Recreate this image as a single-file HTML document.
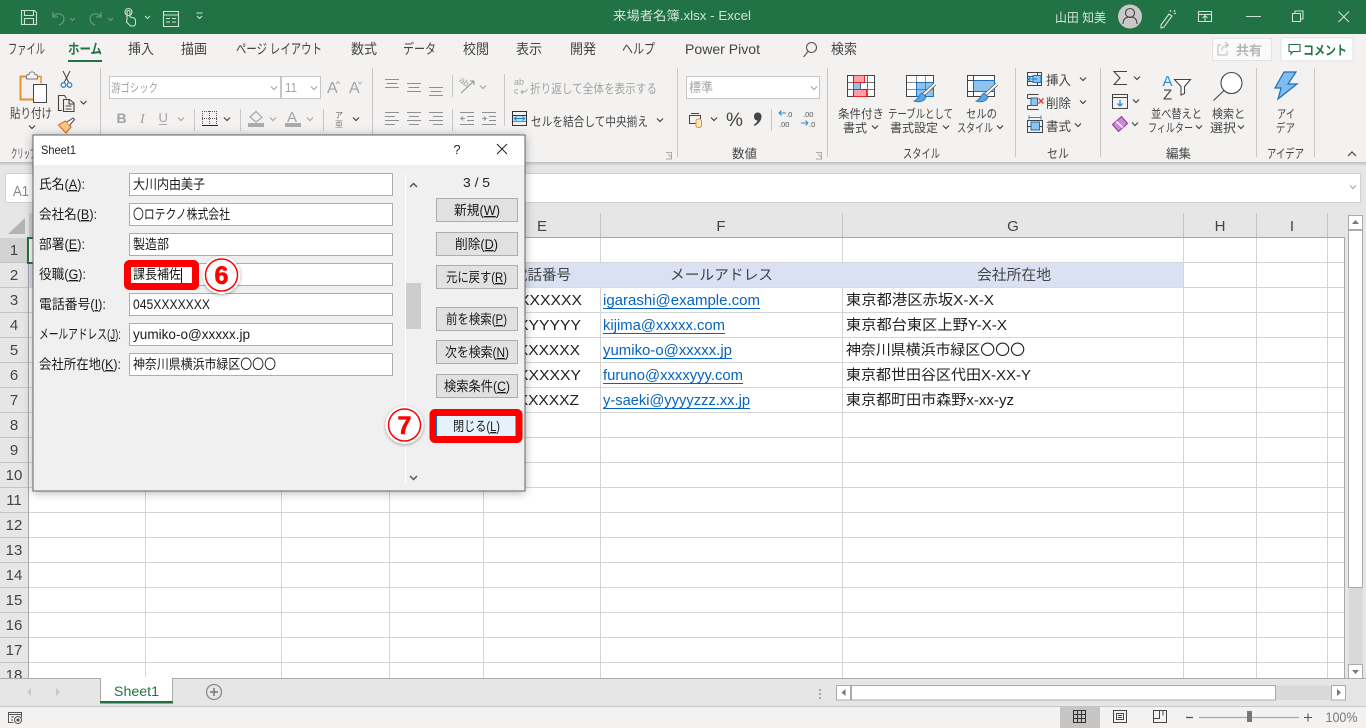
<!DOCTYPE html>
<html lang="ja"><head><meta charset="utf-8"><title>来場者名簿.xlsx - Excel</title>
<style>
html,body{margin:0;padding:0;width:1366px;height:728px;overflow:hidden;background:#e6e6e6}
svg{display:block}
text{font-family:"Liberation Sans","Noto Sans CJK JP",sans-serif;font-size:13px;fill:#444}
.t{font-size:13px;fill:#444}
.dis{fill:#a3a3a3}
.cell{font-size:15px;fill:#222}
.lk{font-size:15px;fill:#0563c1}
.hd{font-size:15px;fill:#444;text-anchor:middle}
.rn{font-size:15px;fill:#444;text-anchor:middle}
.d{font-size:13.5px;fill:#1a1a1a}
.u{text-decoration:underline}
.ttl{font-size:12.5px;fill:#d3e3da}
.tb{font-size:14px}
.rl{font-size:12px}
.gl{font-size:12.5px}
</style></head><body>
<svg width="1366" height="728" viewBox="0 0 1366 728" xmlns="http://www.w3.org/2000/svg">
<defs>
<path id="c" d="M-3-1.500 0 1.500 3-1.500" fill="none" stroke="#444" stroke-width="1.200"/>
<path id="cd" d="M-3-1.500 0 1.500 3-1.500" fill="none" stroke="#a8a8a8" stroke-width="1.200"/>
<filter id="sh" x="-10%" y="-10%" width="120%" height="120%"><feDropShadow dx="0" dy="1" stdDeviation="5" flood-color="#000" flood-opacity=".35"/></filter>
<filter id="sh2" x="-30%" y="-30%" width="160%" height="160%"><feDropShadow dx="0" dy="1" stdDeviation="1.500" flood-color="#000" flood-opacity=".35"/></filter>
<linearGradient id="rs" x1="0" y1="0" x2="0" y2="1"><stop offset="0" stop-color="#bdbdbd"/><stop offset="1" stop-color="#e6e6e6"/></linearGradient>
</defs>

<!-- base -->
<rect width="1366" height="728" fill="#e6e6e6"/>
<rect x="0" y="0" width="1366" height="34" fill="#217346"/>
<rect x="0" y="34" width="1366" height="128" fill="#f3f2f1"/>
<rect x="0" y="162" width="1366" height="4" fill="url(#rs)"/>

<!-- title bar icons -->
<g fill="none" stroke="#cfe0d6" stroke-width="1.100">
<path d="M21.500 10.500h13l2 2v12h-15zM24.500 10.500v5h9v-5M24.500 24.500v-6h9v6"/>
<g stroke="#6f9f85"><path d="M53 12v5h5M53 17c3-5 11-4 11 2 0 3-2 5-5 6"/><path d="M101 12v5h-5M101 17c-3-5-11-4-11 2 0 3 2 5 5 6"/></g>
<path d="M127 19v-7c0-2 3-2 3 0v5l4 1c1.500.5 1.500 2 1.500 3v2c0 2-1 3-2 3h-3l-4-4z"/><circle cx="128.500" cy="12" r="3.500"/>
<path d="M163.500 11.500h15v15h-15zM163.500 15h15M166 18.500h4M172 18.500h4M166 22h4M172 22h4"/>
<path d="M196.500 13h6M197 16l2.500 2.500L202 16"/>
<path d="M1161 25l8-11 3 2-8 11-3 1zM1170 10l1 2M1175 10l-1 2M1176 13l-2 1"/>
<path d="M1198.500 11.500h13v10h-13zM1198.500 14.500h13M1205 21v-5M1202.500 18l2.500-2.500 2.500 2.500"/>
<path d="M1246 16.500h15M1292.500 13.500h8v8h-8zM1295 13.500v-2.500h8v8h-2.500M1338.500 11.500l10.500 10.500M1349 11.500l-10.500 10.500"/>
</g>
<path d="M70 18l2.500 2.500L75 18M108 18l2.500 2.500L113 18" fill="none" stroke="#6f9f85"/>
<path d="M145 16l2.500 2.500L150 16" fill="none" stroke="#cfe0d6"/>
<text x="613" y="20" class="ttl" textLength="138" lengthAdjust="spacingAndGlyphs">来場者名簿.xlsx  -  Excel</text>
<text x="1055" y="22" class="ttl" textLength="51" lengthAdjust="spacingAndGlyphs">山田 知美</text>
<circle cx="1130" cy="16.500" r="12" fill="#c9c9c9"/>
<circle cx="1130" cy="13" r="4.500" fill="none" stroke="#444" stroke-width="1.100"/><path d="M1123 24c0-5 3-7 7-7s7 2 7 7" fill="none" stroke="#444" stroke-width="1.100"/>

<!-- tabs -->
<g>
<text class="tb" x="8" y="54" textLength="37" lengthAdjust="spacingAndGlyphs">ファイル</text>
<text class="tb" x="68" y="54" textLength="34" lengthAdjust="spacingAndGlyphs" style="font-weight:700;fill:#217346">ホーム</text>
<text class="tb" x="128" y="54" textLength="26" lengthAdjust="spacingAndGlyphs">挿入</text>
<text class="tb" x="181" y="54" textLength="26" lengthAdjust="spacingAndGlyphs">描画</text>
<text class="tb" x="236" y="54" textLength="86" lengthAdjust="spacingAndGlyphs">ページ レイアウト</text>
<text class="tb" x="351" y="54" textLength="26" lengthAdjust="spacingAndGlyphs">数式</text>
<text class="tb" x="403" y="54" textLength="33" lengthAdjust="spacingAndGlyphs">データ</text>
<text class="tb" x="463" y="54" textLength="26" lengthAdjust="spacingAndGlyphs">校閲</text>
<text class="tb" x="516" y="54" textLength="26" lengthAdjust="spacingAndGlyphs">表示</text>
<text class="tb" x="570" y="54" textLength="26" lengthAdjust="spacingAndGlyphs">開発</text>
<text class="tb" x="622" y="54" textLength="33" lengthAdjust="spacingAndGlyphs">ヘルプ</text>
<text class="tb" x="685" y="54" textLength="75" lengthAdjust="spacingAndGlyphs">Power Pivot</text>
<text class="tb" x="831" y="54" textLength="26" lengthAdjust="spacingAndGlyphs">検索</text>
</g>
<rect x="68" y="60" width="34" height="2" fill="#217346"/>
<circle cx="811.500" cy="47.500" r="5" fill="none" stroke="#555" stroke-width="1.100"/><path d="M808 51.500l-4.500 5.500" stroke="#555" stroke-width="1.100"/>
<rect x="1212.500" y="38.500" width="59" height="22" fill="#fbfafa" stroke="#e2e1e0"/>
<path d="M1221 45h-3v10h9v-4M1222 50c0-3 2-5 6-5M1225 42l3.500 3-3.500 3" fill="none" stroke="#bbb"/>
<text x="1236" y="55" textLength="26" lengthAdjust="spacingAndGlyphs" style="font-size:13px;font-weight:700;fill:#b5b5b5">共有</text>
<rect x="1281" y="38" width="72" height="23" rx="1" fill="#fff" stroke="#e2e1e0"/>
<path d="M1289 44.500h11v7h-7l-2 2.500v-2.500h-2z" fill="none" stroke="#217346" stroke-width="1.100"/>
<text x="1303" y="55" textLength="44" lengthAdjust="spacingAndGlyphs" style="font-weight:700;fill:#217346">コメント</text>

<!-- ribbon separators -->
<g stroke="#c8c8c8">
<path d="M100.500 68v89M372.500 68v89M677.500 68v89M827.500 68v89M1015.500 68v89M1100.500 68v89M1256.500 68v89M1314.500 68v89M504.500 74v52"/>
<path d="M194.500 109v22M240.500 109v22M323.500 109v22M452.500 75v22M452.500 109v22M771.500 109v22"/>
</g>

<!-- clipboard -->
<path d="M26 76.500h-5.500v23H33" fill="none" stroke="#e8912c" stroke-width="2"/><path d="M37 76.500h4v7" fill="none" stroke="#e8912c" stroke-width="1.500"/>
<path d="M26.500 79v-3c0-1.500 2-1.500 2.500-1.500 0-3.500 6-3.500 6 0 .5 0 2.500 0 2.500 1.500v3z" fill="#f3f2f1" stroke="#777"/>
<rect x="33.500" y="84.500" width="13" height="18" fill="#fff" stroke="#444"/>
<text x="10" y="118" class="t" textLength="42" lengthAdjust="spacingAndGlyphs">貼り付け</text>
<use href="#c" x="32" y="127"/>
<path d="M63 71l6 12M70 71l-6 12" stroke="#444" fill="none"/><circle cx="63.500" cy="85" r="2.300" fill="none" stroke="#2b88d8" stroke-width="1.300"/><circle cx="69.500" cy="85" r="2.300" fill="none" stroke="#2b88d8" stroke-width="1.300"/>
<path d="M62 110.500h-3.500v-15h6l2 3M63.500 99.500h6l4.500 3.500v8.500h-10.500zM69 99.500V104h5M65.500 106h6M65.500 109h6" fill="none" stroke="#444" stroke-width="1.100"/>
<use href="#c" x="83.500" y="102.500"/>
<path d="M58.500 125l7-4 5.500 6-5 6z" fill="#f9c88a" stroke="#d9761a" stroke-width="1.200"/><path d="M67 122l6-4 1.500 1.500-5 6" fill="#fff" stroke="#444"/>

<!-- font -->
<rect x="109.500" y="76.500" width="171" height="22" fill="#fff" stroke="#c6c6c6"/>
<rect x="281.500" y="76.500" width="39" height="22" fill="#fff" stroke="#c6c6c6"/>
<text x="111" y="92" class="dis" textLength="47" lengthAdjust="spacingAndGlyphs" style="font-size:12px">游ゴシック</text>
<use href="#cd" x="274" y="88"/><use href="#cd" x="314" y="88"/>
<text x="285" y="92" class="dis" textLength="12" lengthAdjust="spacingAndGlyphs">11</text>
<text x="327" y="93" class="dis" style="font-size:16px">A</text><path d="M336 84l2-2.500 2 2.500" fill="none" stroke="#aaa"/>
<text x="349" y="93" class="dis" style="font-size:16px">A</text><path d="M358 81.500l2 2.500 2-2.500" fill="none" stroke="#aaa"/>
<text x="116.500" y="123" class="dis" style="font-size:14px;font-weight:700">B</text>
<text x="140" y="123" class="dis" style="font-size:14px;font-style:italic;font-family:'Liberation Serif',serif">I</text>
<text x="158.500" y="122" class="dis" style="font-size:13px">U</text><path d="M159 124.500h8" stroke="#aaa"/>
<use href="#cd" x="181" y="119"/>
<path d="M202 111.500h15M202 118.500h15M209.500 111v14M202.500 111v13M216.500 111v13" stroke="#555" stroke-dasharray="1 1" fill="none"/><path d="M202 125.500h16" stroke="#222"/>
<use href="#c" x="227" y="119"/>
<path d="M250 117l6-5.500 6 6-6 4.500z" fill="none" stroke="#a8a8a8" stroke-width="1.200"/><rect x="248" y="123" width="16" height="4" fill="#aaa"/><use href="#cd" x="273" y="119"/>
<text x="287" y="122" class="dis" style="font-size:15px">A</text><rect x="285" y="123" width="16" height="4" fill="#aaa"/><use href="#cd" x="310" y="119"/>
<text x="339" y="118" class="dis" text-anchor="middle" style="font-size:8px;fill:#666">ア</text><text x="339" y="127" text-anchor="middle" style="font-size:8px;fill:#888">亜</text><use href="#c" x="356" y="119"/>

<!-- alignment -->
<g stroke="#8f8f8f" fill="none">
<path d="M385 79.500h14M386.500 83.500h11M385 87.500h14"/>
<path d="M407 83.500h14M408.500 87.500h11M407 91.500h14"/>
<path d="M429 87.500h14M430.500 91.500h11M429 95.500h14"/>
<path d="M385 112.500h14M385 116.500h10M385 120.500h14M385 124.500h10"/>
<path d="M407 112.500h14M409 116.500h10M407 120.500h14M409 124.500h10"/>
<path d="M429 112.500h14M433 116.500h10M429 120.500h14M433 124.500h10"/>
<path d="M460 112.500h14M467 116.500h7M467 120.500h7M460 124.500h14M465 118.500h-4l2-2M461 118.500l2 2"/>
<path d="M482 112.500h14M489 116.500h7M489 120.500h7M482 124.500h14M482 118.500h4l-2-2M486 118.500l-2 2"/>
<path d="M461 93l13-12M474 81h-4M474 81v4"/>
</g>
<text x="459" y="84" class="dis" style="font-size:9px" transform="rotate(40 463 82)">ab</text>
<use href="#cd" x="483" y="87"/>
<text x="514" y="85" class="dis" style="font-size:9px">ab</text><text x="514" y="94" class="dis" style="font-size:9px">c</text><path d="M527 89c0 3-3 3-6 3M523 90l-2 2 2 2" fill="none" stroke="#aaa"/>
<text x="530" y="93" class="dis" textLength="127" lengthAdjust="spacingAndGlyphs" style="font-size:12.500px">折り返して全体を表示する</text>
<path d="M512.500 111.500h14v14h-14zM512.500 115.500h14M512.500 121.500h14" fill="none" stroke="#333"/><rect x="513" y="116" width="13" height="5.500" fill="#bfe0f7"/><path d="M514.500 118.500h10M516.500 116.500l-2 2 2 2M522.500 116.500l2 2-2 2" fill="none" stroke="#1a7fd0"/>
<text x="531" y="126" class="t" textLength="117" lengthAdjust="spacingAndGlyphs" style="font-size:12.500px">セルを結合して中央揃え</text>
<use href="#c" x="660" y="120"/>

<!-- number -->
<rect x="686.500" y="76.500" width="133" height="22" fill="#fff" stroke="#c6c6c6"/>
<text x="689" y="92" class="dis" textLength="24" lengthAdjust="spacingAndGlyphs">標準</text><use href="#cd" x="814" y="88"/>
<path d="M689.500 115.500h11v8h-11zM691 113.500h8" fill="none" stroke="#444"/><rect x="696" y="119" width="5.500" height="8.500" rx="2" fill="#fbe6c5" stroke="#e8912c"/>
<use href="#c" x="714" y="119"/>
<text x="726" y="126" style="font-size:19px;fill:#444">%</text>
<path d="M757.500 112.500c2.500 0 4 1.500 4 4 0 4-3 7.500-7 9.500l-.8-1c2-1.500 3.300-3 3.800-4.500-2.200 0-3.500-1.800-3.500-4 0-2.500 1.500-4 3.500-4z" fill="#444"/>
<path d="M779 113h7M781.500 110.500l-2.500 2.500 2.500 2.500" stroke="#2b88d8" fill="none"/>
<text x="786" y="117" style="font-size:7.500px;fill:#555">.0</text><text x="779" y="127" style="font-size:7.500px;fill:#555">.00</text>
<text x="803" y="117" style="font-size:7.500px;fill:#555">.00</text><text x="809" y="127" style="font-size:7.500px;fill:#555">.0</text>
<path d="M801 123h7M805.500 120.500l2.500 2.500-2.500 2.500" stroke="#2b88d8" fill="none"/>

<!-- styles icons -->
<rect x="847.500" y="75.500" width="27" height="21" fill="#fff" stroke="#444"/>
<rect x="906.500" y="75.500" width="27" height="21" fill="#fff" stroke="#444"/>
<rect x="967.500" y="75.500" width="27" height="21" fill="#fff" stroke="#444"/>
<rect x="853.500" y="75.500" width="11" height="7" fill="#ffa0a8" stroke="#e22"/><rect x="853.500" y="89.500" width="13" height="7" fill="#ffa0a8" stroke="#e22"/><rect x="853.500" y="83" width="7.500" height="6.500" fill="#8ec3ee"/>
<path d="M847.500 82.500h6M864.500 82.500h10M847.500 89.500h27M853.500 75.500v21M860.500 82.500v7M867.500 75.500v21" fill="none" stroke="#444" stroke-opacity=".75"/>
<rect x="916" y="82" width="17" height="15" fill="#8ec3ee"/><path d="M906.500 82.500h27M906.500 89.500h27M916.500 75.500v21M925.500 75.500v21" fill="none" stroke="#444" stroke-opacity=".6"/>
<path d="M916.500 82.500h17v14h-17z" fill="none" stroke="#1e6fb8"/>
<rect x="973.500" y="80.500" width="21" height="11" fill="#8ec3ee" stroke="#1e6fb8"/><path d="M967.500 80.500h6M973.500 75.500v5M973.500 91.500v5M967.500 91.500h6" stroke="#444" fill="none"/>
<path d="M935 84l-13 12" stroke="#555" stroke-width="3.500"/><path d="M935 84l-13 12" stroke="#fff" stroke-width="2"/><path d="M922 93c-3 1-3 6-8 8 5 2 11 0 12-4z" fill="#5aa6e3" stroke="#1e6fb8" stroke-width=".8"/>
<path d="M997 84l-13 12" stroke="#555" stroke-width="3.500"/><path d="M997 84l-13 12" stroke="#fff" stroke-width="2"/><path d="M984 93c-3 1-3 6-8 8 5 2 11 0 12-4z" fill="#5aa6e3" stroke="#1e6fb8" stroke-width=".8"/>
<g>
<text class="rl" x="838" y="118" textLength="46" lengthAdjust="spacingAndGlyphs">条件付き</text>
<text class="rl" x="843" y="132" textLength="24" lengthAdjust="spacingAndGlyphs">書式</text>
<text class="rl" x="888" y="118" textLength="65" lengthAdjust="spacingAndGlyphs">テーブルとして</text>
<text class="rl" x="890" y="132" textLength="48" lengthAdjust="spacingAndGlyphs">書式設定</text>
<text class="rl" x="966" y="118" textLength="31" lengthAdjust="spacingAndGlyphs">セルの</text>
<text class="rl" x="957" y="132" textLength="36" lengthAdjust="spacingAndGlyphs">スタイル</text>
</g>
<use href="#c" x="875" y="127"/><use href="#c" x="946" y="127"/><use href="#c" x="1000" y="127"/>

<!-- cells -->
<path d="M1027.500 72.500h14v13h-14z" fill="none" stroke="#444"/><path d="M1027.500 76.500h5M1027.500 81.500h5M1037.500 72.500v13" stroke="#444" fill="none"/><rect x="1033" y="75.500" width="8" height="7" fill="#8ec3ee" stroke="#1e6fb8"/><path d="M1037 79h-9M1031 76.500l-3 2.500 3 2.500" stroke="#1e8fe0" fill="none" stroke-width="1.200"/>
<path d="M1027.500 94.500h11M1027.500 109.500h11M1027.500 94.500v4M1027.500 105.500v4M1027.500 98.500h6M1027.500 105.500h6" fill="none" stroke="#444"/><rect x="1031" y="98" width="6.500" height="7.500" fill="#8ec3ee" stroke="#1e6fb8"/><path d="M1038.500 98.500l5 5M1043.500 98.500l-5 5" stroke="#e33" stroke-width="1.300"/>
<path d="M1027.500 120.500h15v12h-15zM1027.500 126.500h4M1039.500 126.500h3" fill="none" stroke="#444"/><rect x="1031" y="122" width="8.500" height="8" fill="#8ec3ee" stroke="#1e6fb8"/><path d="M1029 117.500h12M1029 115.500v4M1041 115.500v4" stroke="#2b88d8" fill="none"/>
<g class="t">
<text x="1046" y="85" textLength="25" lengthAdjust="spacingAndGlyphs">挿入</text>
<text x="1046" y="108" textLength="25" lengthAdjust="spacingAndGlyphs">削除</text>
<text x="1046" y="131" textLength="25" lengthAdjust="spacingAndGlyphs">書式</text>
</g>
<use href="#c" x="1083" y="79"/><use href="#c" x="1083" y="102"/><use href="#c" x="1078" y="125"/>

<!-- edit -->
<path d="M1127 71.500h-13l6 6.500-6 6.500h13" fill="none" stroke="#444" stroke-width="1.100"/><use href="#c" x="1137" y="78"/>
<path d="M1112.500 94.500h15v14h-15zM1112.500 97.500h15" fill="none" stroke="#444"/><path d="M1120 100v6M1117.500 103.500l2.500 2.500 2.500-2.500" fill="none" stroke="#2b88d8" stroke-width="1.300"/><use href="#c" x="1136" y="101"/>
<path d="M1112.500 124.500l9-8 6 7-9 8z" fill="#c98bd3" stroke="#9a35a8" stroke-width="1.100"/><path d="M1116 121.500l7 6" stroke="#fff" stroke-width="2" opacity=".7"/><use href="#c" x="1135" y="124"/>
<text x="1162.500" y="86" style="font-size:15px;fill:#2b88d8">A</text><text x="1163" y="99.500" style="font-size:15px;fill:#444">Z</text>
<path d="M1174.500 79.500h16l-6 7v7l-3.500 1.500v-8.500z" fill="#fff" stroke="#444" stroke-width="1.100"/>
<circle cx="1231.500" cy="83" r="10.500" fill="#fff" stroke="#444" stroke-width="1.100"/><path d="M1224 90.500l-10.500 10" stroke="#444" stroke-width="1.100"/>
<g>
<text class="rl" x="1151" y="118" textLength="51" lengthAdjust="spacingAndGlyphs">並べ替えと</text>
<text class="rl" x="1148" y="132" textLength="45" lengthAdjust="spacingAndGlyphs">フィルター</text>
<text class="rl" x="1212" y="118" textLength="33" lengthAdjust="spacingAndGlyphs">検索と</text>
<text class="rl" x="1210" y="132" textLength="26" lengthAdjust="spacingAndGlyphs">選択</text>
<text class="rl" x="1277" y="118" textLength="18" lengthAdjust="spacingAndGlyphs">アイ</text>
<text class="rl" x="1276" y="132" textLength="19" lengthAdjust="spacingAndGlyphs">デア</text>
</g>
<use href="#c" x="1199" y="127"/><use href="#c" x="1241" y="127"/>
<path d="M1284 72h12l-8 12h9l-19 15 3-11h-6z" fill="#7dbdf0" stroke="#1e6fb8" stroke-width="1.200"/>

<!-- group labels -->
<g>
<text class="gl" x="11" y="158" textLength="44" lengthAdjust="spacingAndGlyphs">クリップボード</text>
<text class="gl" x="732" y="158" textLength="25" lengthAdjust="spacingAndGlyphs">数値</text>
<text class="gl" x="903" y="158" textLength="37" lengthAdjust="spacingAndGlyphs">スタイル</text>
<text class="gl" x="1047" y="158" textLength="22" lengthAdjust="spacingAndGlyphs">セル</text>
<text class="gl" x="1166" y="158" textLength="25" lengthAdjust="spacingAndGlyphs">編集</text>
<text class="gl" x="1267" y="158" textLength="37" lengthAdjust="spacingAndGlyphs">アイデア</text>
</g>
<path d="M666 152.500h6M671.500 153v6M666 159h6M668 154l3 3" stroke="#aaa" fill="none"/><path d="M816 152.500h6M821.500 153v6M816 159h6M818 154l3 3" stroke="#aaa" fill="none"/>
<path d="M1348 156l4-4 4 4" fill="none" stroke="#444" stroke-width="1.200"/>

<!-- formula bar -->
<rect x="5.500" y="173.500" width="120" height="29" fill="#fff" stroke="#d0d0d0"/>
<rect x="130.500" y="173.500" width="1230" height="29" fill="#fff" stroke="#d0d0d0"/>
<text x="13" y="196" style="font-size:15px;fill:#888" textLength="16" lengthAdjust="spacingAndGlyphs">A1</text>
<use href="#cd" x="1353" y="187"/>

<!-- grid -->
<rect x="28" y="238" width="1316" height="440" fill="#fff"/>
<rect x="0" y="213" width="1344" height="25" fill="#e6e6e6"/>
<rect x="0" y="238" width="28" height="440" fill="#e6e6e6"/>
<rect x="0" y="238" width="28" height="25" fill="#d2d2d2"/>
<rect x="29" y="213" width="116" height="25" fill="#d2d2d2"/>
<g stroke="#d4d4d4" fill="none">
<path d="M28 262.500h1316M28 287.500h1316M28 312.500h1316M28 337.500h1316M28 362.500h1316M28 387.500h1316M28 412.500h1316M28 437.500h1316M28 462.500h1316M28 487.500h1316M28 512.500h1316M28 537.500h1316M28 562.500h1316M28 587.500h1316M28 612.500h1316M28 637.500h1316M28 662.500h1316"/>
<path d="M145.500 238v440M281.500 238v440M389.500 238v440M483.500 238v440M600.500 238v440M842.500 238v440M1183.500 238v440M1256.500 238v440M1327.500 238v440"/>
</g>
<rect x="29" y="263" width="1154" height="24.500" fill="#d9e1f2"/>
<g stroke="#c4c4c4" fill="none">
<path d="M0 262.500h28M0 287.500h28M0 312.500h28M0 337.500h28M0 362.500h28M0 387.500h28M0 412.500h28M0 437.500h28M0 462.500h28M0 487.500h28M0 512.500h28M0 537.500h28M0 562.500h28M0 587.500h28M0 612.500h28M0 637.500h28M0 662.500h28"/>
<path d="M145.500 213v24M281.500 213v24M389.500 213v24M483.500 213v24M600.500 213v24M842.500 213v24M1183.500 213v24M1256.500 213v24M1327.500 213v24"/>
</g>
<path d="M28 237.500h1316.500V678M28.500 237v441" stroke="#a8a8a8" fill="none"/>
<path d="M8 234l17-16v16z" fill="#b4b4b4"/>
<path d="M34 238H28V263H34" fill="none" stroke="#217346" stroke-width="2"/>

<g class="hd">
<text class="hd" x="542" y="231">E</text><text class="hd" x="721" y="231">F</text><text class="hd" x="1013" y="231">G</text><text class="hd" x="1220" y="231">H</text><text class="hd" x="1292" y="231">I</text>
</g>
<g>
<text class="rn" x="14" y="255">1</text><text class="rn" x="14" y="280">2</text><text class="rn" x="14" y="305">3</text><text class="rn" x="14" y="330">4</text><text class="rn" x="14" y="355">5</text><text class="rn" x="14" y="380">6</text><text class="rn" x="14" y="405">7</text><text class="rn" x="14" y="430">8</text><text class="rn" x="14" y="455">9</text><text class="rn" x="14" y="480">10</text><text class="rn" x="14" y="505">11</text><text class="rn" x="14" y="530">12</text><text class="rn" x="14" y="555">13</text><text class="rn" x="14" y="580">14</text><text class="rn" x="14" y="605">15</text><text class="rn" x="14" y="630">16</text><text class="rn" x="14" y="655">17</text><text class="rn" x="14" y="680">18</text>
</g>

<!-- cell text -->
<text x="513" y="280" class="cell" textLength="58" lengthAdjust="spacingAndGlyphs" style="font-size:14.500px;fill:#444">電話番号</text>
<text x="670" y="280" class="cell" textLength="103" lengthAdjust="spacingAndGlyphs" style="font-size:14.500px;fill:#444">メールアドレス</text>
<text x="977" y="280" class="cell" textLength="74" lengthAdjust="spacingAndGlyphs" style="font-size:14.500px;fill:#444">会社所在地</text>
<text x="508.500" y="305" class="cell" textLength="73.500" lengthAdjust="spacingAndGlyphs">XXXXXXX</text>
<text x="497" y="330" class="cell" textLength="84" lengthAdjust="spacingAndGlyphs">XXXYYYYY</text>
<text x="507.500" y="355" class="cell" textLength="72.500" lengthAdjust="spacingAndGlyphs">XXXXXXX</text>
<text x="497" y="380" class="cell" textLength="84" lengthAdjust="spacingAndGlyphs">XXXXXXXY</text>
<text x="497" y="405" class="cell" textLength="82" lengthAdjust="spacingAndGlyphs">XXXXXXXZ</text>
<text x="603" y="305" class="lk" textLength="157" lengthAdjust="spacingAndGlyphs">igarashi@example.com</text><path d="M603 308.500h157" stroke="#0563c1"/>
<text x="603" y="330" class="lk" textLength="122" lengthAdjust="spacingAndGlyphs">kijima@xxxxx.com</text><path d="M603 333.500h122" stroke="#0563c1"/>
<text x="603" y="355" class="lk" textLength="129" lengthAdjust="spacingAndGlyphs">yumiko-o@xxxxx.jp</text><path d="M603 358.500h129" stroke="#0563c1"/>
<text x="603" y="380" class="lk" textLength="140" lengthAdjust="spacingAndGlyphs">furuno@xxxxyyy.com</text><path d="M603 383.500h140" stroke="#0563c1"/>
<text x="603" y="405" class="lk" textLength="147" lengthAdjust="spacingAndGlyphs">y-saeki@yyyyzzz.xx.jp</text><path d="M603 408.500h147" stroke="#0563c1"/>
<text x="846" y="305" class="cell" textLength="148" lengthAdjust="spacingAndGlyphs" style="font-size:14.500px">東京都港区赤坂X-X-X</text>
<text x="846" y="330" class="cell" textLength="161" lengthAdjust="spacingAndGlyphs" style="font-size:14.500px">東京都台東区上野Y-X-X</text>
<text x="846" y="355" class="cell" textLength="179" lengthAdjust="spacingAndGlyphs" style="font-size:14.500px">神奈川県横浜市緑区〇〇〇</text>
<text x="846" y="380" class="cell" textLength="185" lengthAdjust="spacingAndGlyphs" style="font-size:14.500px">東京都世田谷区代田X-XX-Y</text>
<text x="846" y="405" class="cell" textLength="168" lengthAdjust="spacingAndGlyphs" style="font-size:14.500px">東京都町田市森野x-xx-yz</text>

<!-- vertical scrollbar -->
<rect x="1345" y="213" width="21" height="465" fill="#e6e6e6"/>
<rect x="1348.500" y="230" width="14" height="434" fill="#d9d9d9"/>
<rect x="1348.500" y="215.500" width="14" height="14" fill="#fff" stroke="#ababab"/>
<rect x="1348.500" y="230.500" width="14" height="357" fill="#fff" stroke="#ababab"/>
<rect x="1348.500" y="664.500" width="14" height="14" fill="#fff" stroke="#ababab"/>
<path d="M1352 224h7l-3.500-4z" fill="#777"/><path d="M1352 670h7l-3.500 4z" fill="#777"/>

<!-- sheet bar -->
<rect x="0" y="678" width="1366" height="28" fill="#e6e6e6"/>
<path d="M0 678.500h1366" stroke="#ababab"/>
<path d="M0 706.500h1366" stroke="#c6c6c6"/>
<path d="M31 688v8l-4-4zM56 688v8l4-4z" fill="#c8c8c8"/>
<rect x="100.500" y="678" width="72" height="25" fill="#fff"/>
<path d="M100.500 678v24M172.500 678v24" stroke="#ababab"/>
<rect x="100" y="701" width="73" height="2.500" fill="#217346"/>
<rect x="101" y="677" width="71" height="2" fill="#fff"/>
<text x="114" y="696" textLength="45" lengthAdjust="spacingAndGlyphs" style="font-size:13.500px;fill:#217346">Sheet1</text>
<circle cx="214" cy="692" r="7.500" fill="none" stroke="#8a8a8a" stroke-width="1.300"/><path d="M214 688v8M210 692h8" stroke="#777" stroke-width="1.500"/>
<path d="M820 689v2M820 693v2M820 697v2" stroke="#a8a8a8" stroke-width="2"/>
<rect x="836.500" y="685.500" width="509" height="14.500" fill="#d9d9d9"/>
<rect x="836.500" y="685.500" width="14" height="14.500" fill="#fff" stroke="#ababab"/>
<rect x="851.500" y="685.500" width="424" height="14.500" fill="#fff" stroke="#ababab"/>
<rect x="1331.500" y="685.500" width="14" height="14.500" fill="#fff" stroke="#ababab"/>
<path d="M845.500 689v7l-4-3.500zM1337 689v7l4-3.500z" fill="#777"/>

<!-- status bar -->
<rect x="0" y="707" width="1366" height="21" fill="#f3f2f1"/>
<path d="M8.500 712.500h13v2h-13zM8.500 714.500v8h5M21.500 714.500v3M11 717h3M11 720h2" fill="none" stroke="#555"/><circle cx="18" cy="720" r="3.500" fill="#f3f2f1" stroke="#555"/><circle cx="18" cy="720" r="1.500" fill="#444"/>
<rect x="1060" y="707" width="40" height="21" fill="#c6c5c4"/>
<path d="M1073.500 710.500h12v12h-12zM1077.500 710.500v12M1081.500 710.500v12M1073.500 714.500h12M1073.500 718.500h12" fill="none" stroke="#333"/>
<path d="M1113.500 710.500h13v12h-13zM1116.500 713.500h7v6h-7zM1118 715.500h4M1118 717.500h4" fill="none" stroke="#444"/>
<path d="M1153.500 710.500h13v12h-13zM1153.500 718.500h6v-8M1163 710.500v5" fill="none" stroke="#444"/>
<path d="M1186 717.500h7" stroke="#555" stroke-width="1.300"/>
<path d="M1199 717.500h100" stroke="#aaa" stroke-width="1.300"/>
<rect x="1247" y="711" width="5" height="11" fill="#777"/>
<path d="M1304 717.500h8M1308 713.500v8" stroke="#555" stroke-width="1.100"/>
<text x="1325.500" y="722" textLength="32" lengthAdjust="spacingAndGlyphs" style="font-size:13.500px;fill:#777">100%</text>

<!-- dialog -->
<rect x="33" y="135" width="492" height="356" fill="#f0f0f0" filter="url(#sh)"/>
<rect x="33" y="135" width="492" height="30" fill="#fff"/>
<rect x="33" y="135" width="492" height="356" fill="none" stroke="#666"/>
<text x="41" y="154" textLength="35" lengthAdjust="spacingAndGlyphs" style="font-size:12px;fill:#222">Sheet1</text>
<text x="457" y="154" text-anchor="middle" style="font-size:13px;fill:#222">?</text>
<path d="M497 144l10 10M507 144l-10 10" stroke="#222" fill="none"/>
<g fill="#fff" stroke="#adadad">
<rect x="129.500" y="173.500" width="263" height="22"/><rect x="129.500" y="203.500" width="263" height="22"/><rect x="129.500" y="233.500" width="263" height="22"/><rect x="129.500" y="263.500" width="263" height="22"/><rect x="129.500" y="293.500" width="263" height="22"/><rect x="129.500" y="323.500" width="263" height="22"/><rect x="129.500" y="353.500" width="263" height="22"/>
</g>
<text class="d" x="39" y="189" textLength="46" lengthAdjust="spacingAndGlyphs">氏名(<tspan class="u">A</tspan>):</text>
<text class="d" x="39" y="219" textLength="58" lengthAdjust="spacingAndGlyphs">会社名(<tspan class="u">B</tspan>):</text>
<text class="d" x="39" y="249" textLength="46" lengthAdjust="spacingAndGlyphs">部署(<tspan class="u">E</tspan>):</text>
<text class="d" x="39" y="279" textLength="47" lengthAdjust="spacingAndGlyphs">役職(<tspan class="u">G</tspan>):</text>
<text class="d" x="39" y="309" textLength="67" lengthAdjust="spacingAndGlyphs">電話番号(<tspan class="u">I</tspan>):</text>
<text class="d" x="39" y="339" textLength="82" lengthAdjust="spacingAndGlyphs">メールアドレス(<tspan class="u">J</tspan>):</text>
<text class="d" x="39" y="369" textLength="82" lengthAdjust="spacingAndGlyphs">会社所在地(<tspan class="u">K</tspan>):</text>
<text class="d" x="133" y="189" textLength="72" lengthAdjust="spacingAndGlyphs">大川内由美子</text>
<text class="d" x="133" y="219" textLength="97" lengthAdjust="spacingAndGlyphs">〇ロテクノ株式会社</text>
<text class="d" x="133" y="249" textLength="36" lengthAdjust="spacingAndGlyphs">製造部</text>
<text class="d" x="133" y="309" textLength="77" lengthAdjust="spacingAndGlyphs">045XXXXXXX</text>
<text class="d" x="133" y="339" textLength="117" lengthAdjust="spacingAndGlyphs">yumiko-o@xxxxx.jp</text>
<text class="d" x="133" y="369" textLength="143" lengthAdjust="spacingAndGlyphs">神奈川県横浜市緑区〇〇〇</text>
<!-- scroll -->
<path d="M405.500 174v310" stroke="#fff"/>
<rect x="406" y="283" width="15" height="46" fill="#cdcdcd"/>
<path d="M410 187l3.500-3.500 3.500 3.500M410 476l3.500 3.500 3.500-3.500" fill="none" stroke="#555" stroke-width="1.500"/>
<text x="476.500" y="187" text-anchor="middle" textLength="27" lengthAdjust="spacingAndGlyphs" style="font-size:13px;fill:#222">3 / 5</text>
<!-- buttons -->
<g fill="#e1e1e1" stroke="#adadad">
<rect x="436.500" y="198.500" width="81" height="23"/><rect x="436.500" y="232.500" width="81" height="23"/><rect x="436.500" y="265.500" width="81" height="23"/><rect x="436.500" y="307.500" width="81" height="23"/><rect x="436.500" y="340.500" width="81" height="23"/><rect x="436.500" y="374.500" width="81" height="23"/>
</g>
<text class="d" x="454" y="215" textLength="46" lengthAdjust="spacingAndGlyphs">新規(<tspan class="u">W</tspan>)</text>
<text class="d" x="455" y="249" textLength="43" lengthAdjust="spacingAndGlyphs">削除(<tspan class="u">D</tspan>)</text>
<text class="d" x="446" y="282" textLength="61" lengthAdjust="spacingAndGlyphs">元に戻す(<tspan class="u">R</tspan>)</text>
<text class="d" x="446" y="324" textLength="61" lengthAdjust="spacingAndGlyphs">前を検索(<tspan class="u">P</tspan>)</text>
<text class="d" x="445" y="357" textLength="64" lengthAdjust="spacingAndGlyphs">次を検索(<tspan class="u">N</tspan>)</text>
<text class="d" x="444" y="391" textLength="66" lengthAdjust="spacingAndGlyphs">検索条件(<tspan class="u">C</tspan>)</text>
<!-- close -->
<rect x="433" y="412.500" width="86" height="27" rx="2" fill="#e5f1fb" stroke="#f00" stroke-width="7"/>
<path d="M436.500 416v20" stroke="#0078d7" stroke-width="1"/>
<text class="d" x="453" y="431" textLength="47" lengthAdjust="spacingAndGlyphs">閉じる(<tspan class="u">L</tspan>)</text>
<!-- red box 6 -->
<rect x="127.500" y="263.500" width="68" height="23" rx="2" fill="#fff" stroke="#f00" stroke-width="7"/>
<text class="d" x="133" y="279" textLength="48" lengthAdjust="spacingAndGlyphs">課長補佐</text>
<path d="M181.500 268v15" stroke="#111"/>
<!-- circles -->
<g filter="url(#sh2)"><circle cx="221.500" cy="275" r="19" fill="#fff"/></g>
<circle cx="221.500" cy="275" r="16" fill="#fff" stroke="#f00" stroke-width="1.500"/>
<text x="221.500" y="284" text-anchor="middle" style="font-size:25px;font-weight:700;fill:#f00;stroke:#f00;stroke-width:.6">6</text>
<g filter="url(#sh2)"><circle cx="404.500" cy="425" r="19" fill="#fff"/></g>
<circle cx="404.500" cy="425" r="16" fill="#fff" stroke="#f00" stroke-width="1.500"/>
<text x="404.500" y="434" text-anchor="middle" style="font-size:25px;font-weight:700;fill:#f00;stroke:#f00;stroke-width:.6">7</text>
</svg>
</body></html>
